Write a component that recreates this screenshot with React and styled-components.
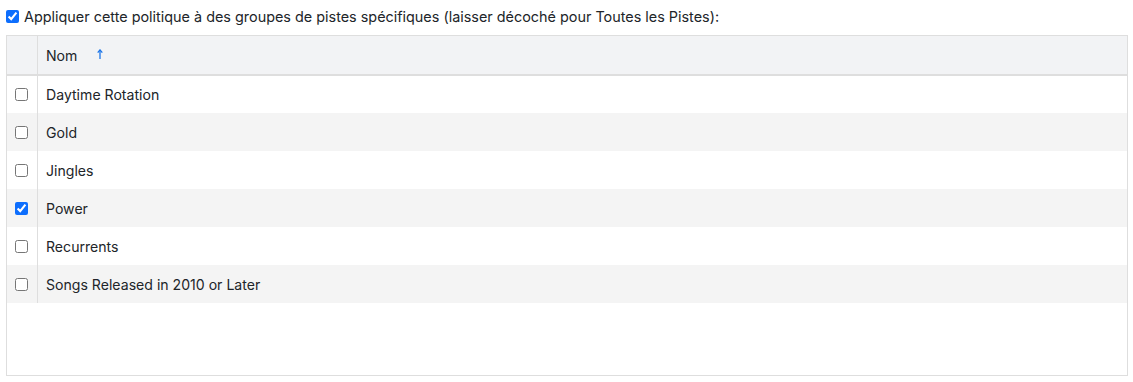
import React, { useState } from 'react';
import styled, { createGlobalStyle } from 'styled-components';

const groups = [
  { id: 1, name: 'Daytime Rotation', checked: false },
  { id: 2, name: 'Gold', checked: false },
  { id: 3, name: 'Jingles', checked: false },
  { id: 4, name: 'Power', checked: true },
  { id: 5, name: 'Recurrents', checked: false },
  { id: 6, name: 'Songs Released in 2010 or Later', checked: false },
];

function App() {
  const [rows, setRows] = useState(groups);
  const [enabled, setEnabled] = useState(true);

  const toggle = (id) =>
    setRows(rows.map((r) => (r.id === id ? { ...r, checked: !r.checked } : r)));

  return (
    <Page>
      <GlobalStyle />
      <TopLabel>
        <TopCheck
          type="checkbox"
          checked={enabled}
          onChange={() => setEnabled(!enabled)}
        />
        Appliquer cette politique à des groupes de pistes spécifiques (laisser
        décoché pour Toutes les Pistes):
      </TopLabel>
      <TableBox>
        <Table>
          <thead>
            <tr>
              <HeadCheckCell />
              <HeadCell>
                Nom
                <SortArrow viewBox="0 0 8 12">
                  <path d="M4 1 L4 11" />
                  <path d="M1.5 4 L4 1 L6.5 4" />
                </SortArrow>
              </HeadCell>
            </tr>
          </thead>
          <tbody>
            {rows.map((row, i) => (
              <Row key={row.id} $striped={i % 2 === 1}>
                <CheckCell>
                  <RowCheck
                    type="checkbox"
                    checked={row.checked}
                    onChange={() => toggle(row.id)}
                  />
                </CheckCell>
                <NameCell>{row.name}</NameCell>
              </Row>
            ))}
          </tbody>
        </Table>
      </TableBox>
    </Page>
  );
}

const GlobalStyle = createGlobalStyle`
  body {
    margin: 0;
    background: #fff;
    font-family: Inter, "Noto Sans", sans-serif;
    color: #212529;
  }
`;

const Page = styled.div`
  padding: 6px 5px 6px 6px;
`;

const TopLabel = styled.label`
  display: flex;
  align-items: center;
  height: 20px;
  font-size: 14.4px;
  color: #212529;
`;

const TopCheck = styled.input`
  width: 13px;
  height: 13px;
  margin: 0 5px 0 0;
  accent-color: #0d6efd;
`;

const TableBox = styled.div`
  margin-top: 9px;
  height: 341px;
  border: 1px solid #dedede;
  box-sizing: border-box;
  overflow: hidden;
`;

const Table = styled.table`
  width: 100%;
  border-collapse: collapse;
  font-size: 14.1px;
`;

const HeadCheckCell = styled.th`
  width: 30px;
  height: 38px;
  padding: 0;
  background: #f2f3f5;
  border-right: 1px solid #dedede;
  border-bottom: 2px solid #dedede;
`;

const HeadCell = styled.th`
  height: 38px;
  padding: 0 0 0 8px;
  text-align: left;
  font-weight: 400;
  background: #f2f3f5;
  border-bottom: 2px solid #dedede;
`;

const SortArrow = styled.svg`
  width: 8px;
  height: 11px;
  margin-left: 19px;
  vertical-align: 1px;
  fill: none;
  stroke: #1a73e8;
  stroke-width: 1.4;
`;

const Row = styled.tr`
  height: 38px;
  background: ${(p) => (p.$striped ? '#f4f4f4' : '#fff')};
`;

const CheckCell = styled.td`
  width: 30px;
  padding: 0 0 0 8px;
  box-sizing: border-box;
  text-align: left;
  border-right: 1px solid #dedede;
`;

const RowCheck = styled.input`
  display: block;
  width: 13px;
  height: 13px;
  margin: 0;
  accent-color: #0d6efd;
`;

const NameCell = styled.td`
  padding: 0 0 0 8px;
`;

export default App;
